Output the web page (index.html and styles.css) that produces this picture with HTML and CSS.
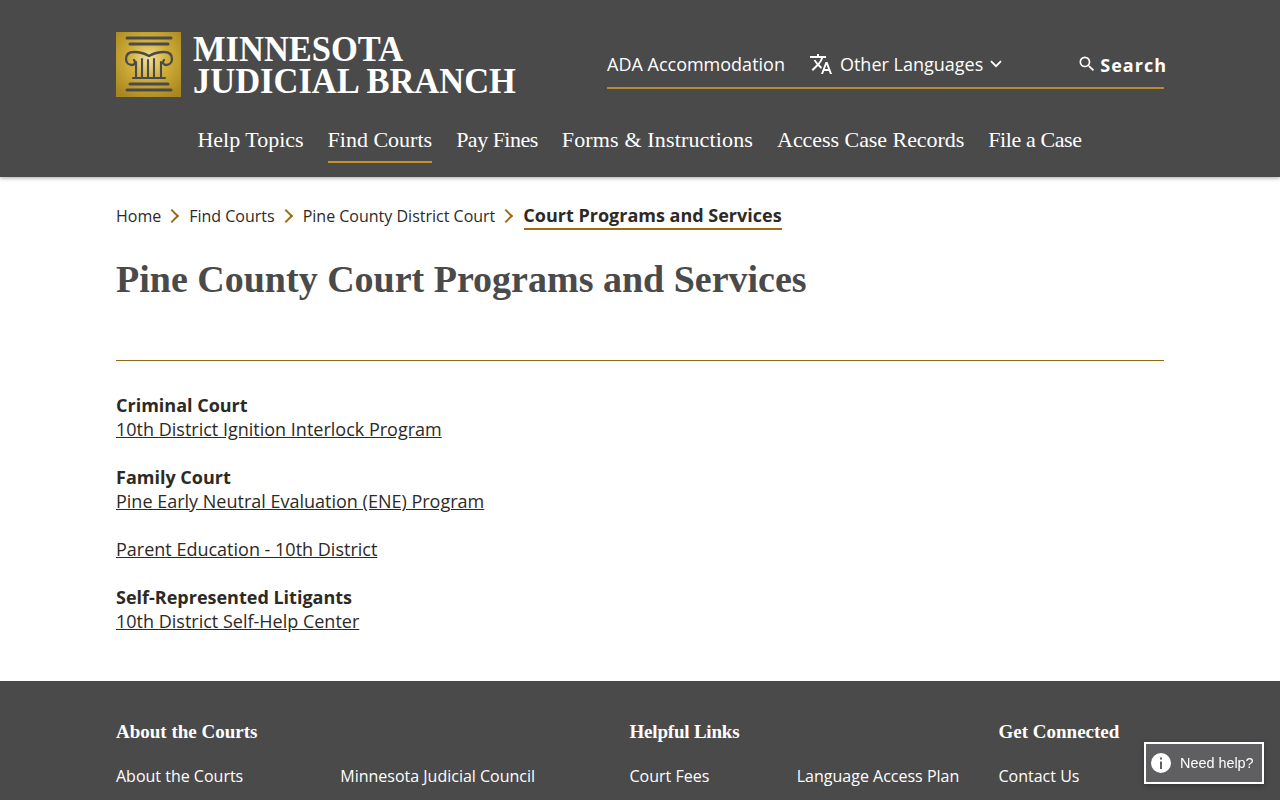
FILE: index.html
```html
<!DOCTYPE html>
<html lang="en">
<head>
<meta charset="utf-8">
<title>Pine County Court Programs and Services</title>
<link rel="stylesheet" href="styles.css">
</head>
<body>
<header class="site-header">
  <div class="header-top">
    <a class="brand" href="#">
      <svg class="brand-mark" viewBox="0 0 65 65" width="65" height="65">
        <defs>
          <radialGradient id="gold" cx="50%" cy="42%" r="68%">
            <stop offset="0" stop-color="#f0e09a"/>
            <stop offset=".45" stop-color="#d0ae3a"/>
            <stop offset="1" stop-color="#a8871f"/>
          </radialGradient>
        </defs>
        <rect width="65" height="65" fill="url(#gold)"/>
        <g fill="none" stroke="#4a4a4a" stroke-linecap="round">
          <path d="M11 6H55M14 12H52M14 52H52M11 58H55" stroke-width="3"/>
          <path d="M33 24C28 21 24 20 18 20C12 20 10 23 10 27C10 31 13 33 16 33C19 33 20 30 18 28M33 24C38 21 42 20 48 20C54 20 56 23 56 27C56 31 53 33 50 33C47 33 46 30 48 28" stroke-width="2.300"/>
          <path d="M20 30V46M26 27V46M32 28V46M38 27V46M45 30V46M17 46H49" stroke-width="2.100"/>
        </g>
      </svg>
      <span class="brand-text"><span>MINNESOTA</span><span>JUDICIAL BRANCH</span></span>
    </a>
    <div class="utility">
      <a class="util-link" href="#">ADA Accommodation</a>
      <a class="util-link lang" href="#">
        <svg class="lang-icon" viewBox="0 0 24 24" width="24" height="24"><path fill="#fff" d="M12.870 15.070l-2.540-2.510.030-.030A17.520 17.520 0 0 0 14.070 6H17V4h-7V2H8v2H1v1.990h11.170C11.500 7.920 10.440 9.750 9 11.350 8.070 10.320 7.300 9.190 6.690 8h-2c.73 1.630 1.730 3.170 2.980 4.560l-5.090 5.020L4 19l5-5 3.110 3.110.76-2.040zM18.500 10h-2L12 22h2l1.120-3h4.750L21 22h2l-4.500-12zm-2.620 7l1.620-4.330L19.120 17h-3.240z"/></svg>
        Other Languages
        <svg class="chev" viewBox="0 0 12 8" width="12" height="8"><path d="M1 1.200l5 5 5-5" fill="none" stroke="#fff" stroke-width="1.800"/></svg>
      </a>
      <a class="search" href="#">
        <svg viewBox="0 0 24 24" width="20" height="20"><path fill="#fff" d="M15.500 14h-.79l-.28-.27A6.470 6.470 0 0 0 16 9.500 6.500 6.500 0 1 0 9.500 16c1.610 0 3.090-.59 4.230-1.570l.27.28v.79l5 4.990L20.490 19l-4.990-5zm-6 0C7.010 14 5 11.990 5 9.500S7.010 5 9.500 5 14 7.010 14 9.500 11.990 14 9.500 14z"/></svg>
        <span class="search-label">Search</span>
      </a>
    </div>
  </div>
  <nav class="main-nav">
    <a href="#">Help Topics</a>
    <a href="#" class="active">Find Courts</a>
    <a href="#" class="tighter">Pay Fines</a>
    <a href="#" class="loose">Forms &amp; Instructions</a>
    <a href="#" class="snug">Access Case Records</a>
    <a href="#" class="tight">File a Case</a>
  </nav>
</header>
<main class="content">
  <ol class="crumbs">
    <li><a href="#">Home</a></li>
    <li><a href="#">Find Courts</a></li>
    <li><a href="#">Pine County District Court</a></li>
    <li class="current">Court Programs and Services</li>
  </ol>
  <h1>Pine County Court Programs and Services</h1>
  <hr class="rule">
  <section class="programs">
    <p><strong>Criminal Court</strong><br><a href="#">10th District Ignition Interlock Program</a></p>
    <p><strong>Family Court</strong><br><a href="#">Pine Early Neutral Evaluation (ENE) Program</a></p>
    <p><a href="#">Parent Education - 10th District</a></p>
    <p><strong>Self-Represented Litigants</strong><br><a href="#">10th District Self-Help Center</a></p>
  </section>
</main>
<footer class="site-footer">
  <div class="foot-col col-about">
    <h2>About the Courts</h2>
    <div class="foot-links"><a href="#">About the Courts</a><a href="#">Minnesota Judicial Council</a></div>
  </div>
  <div class="foot-col col-help">
    <h2>Helpful Links</h2>
    <div class="foot-links"><a href="#">Court Fees</a><a href="#">Language Access Plan</a></div>
  </div>
  <div class="foot-col">
    <h2>Get Connected</h2>
    <div class="foot-links"><a href="#">Contact Us</a></div>
  </div>
</footer>
<button class="help-btn">
  <svg viewBox="0 0 20 20" width="20" height="20"><circle cx="10" cy="10" r="10" fill="#fff"/><path d="M9 8.500h2V16H9zM9 4.500h2v2H9z" fill="#5f5f61"/></svg>
  Need help?
</button>
</body>
</html>
```
FILE: styles.css
```css
* { box-sizing: border-box; }
html, body { margin: 0; height: 800px; overflow: hidden; }
body { font-family: "Open Sans", sans-serif; color: #2d2a26; background: #fff; font-size: 18px; line-height: 24px; }
a { color: inherit; }

.site-header { height: 177px; background: #4a4a4a; padding: 32px 116px 0; box-shadow: 0 1px 4px rgba(0,0,0,.35); position: relative; }
.header-top { display: flex; justify-content: space-between; height: 66px; }
.brand { display: flex; gap: 12px; text-decoration: none; color: #fff; }
.brand-mark { display: block; }
.brand-text { display: flex; flex-direction: column; font-family: "Liberation Serif", serif; font-weight: 700; font-size: 36px; line-height: 32px; padding-top: 1px; white-space: nowrap; transform: scaleX(.958); transform-origin: left top; }
.utility { width: 557px; height: 57px; border-bottom: 2px solid #b98a2e; display: flex; align-items: center; color: #fff; font-size: 18px; padding-top: 8px; }
.util-link { text-decoration: none; white-space: nowrap; }
.lang { margin-left: 24px; display: flex; align-items: center; gap: 7px; }
.lang-icon { display: block; }
.chev { display: block; }
.search { margin-left: auto; margin-right: -3px; display: flex; align-items: center; gap: 3px; font-weight: 700; text-decoration: none; letter-spacing: 1px; }
.search-label { padding-top: 2px; }
.main-nav { display: flex; justify-content: center; gap: 24px; margin: 25px 0 0 -1px; font-family: "Liberation Serif", serif; font-size: 22px; color: #fff; }
.main-nav a { text-decoration: none; height: 40px; line-height: 34px; white-space: nowrap; }
.main-nav .active { border-bottom: 2px solid #c8912a; }
.main-nav .tight { letter-spacing: -.4px; }
.main-nav .tighter { letter-spacing: -.5px; }
.main-nav .snug { letter-spacing: -.05px; }
.main-nav .loose { letter-spacing: .15px; }

.content { padding: 26px 116px 0; height: 504px; }
.crumbs { list-style: none; margin: 0; padding: 0; height: 25px; display: flex; font-size: 16px; line-height: 25px; }
.crumbs li { display: flex; align-items: center; }
.crumbs a { text-decoration: none; padding-top: 2px; }
.crumbs li + li::before { content: ""; width: 8px; height: 8px; margin: 0 12px 0 6px; border-top: 2.5px solid #9a6c14; border-right: 2.5px solid #9a6c14; transform: rotate(45deg); }
.crumbs .current { font-size: 18px; font-weight: 700; position: relative; }
.crumbs .current::after { content: ""; position: absolute; left: 29px; right: 0; bottom: -2px; height: 2px; background: #9a6c14; }
h1 { margin: 27px 0 0; font-family: "Liberation Serif", serif; font-weight: 700; font-size: 38px; line-height: 48px; color: #4a4a4a; }
.rule { border: 0; border-top: 1px solid #8c6c12; margin: 57px 0 0; }
.programs { padding-top: 32px; }
.programs p { margin: 0 0 24px; }
.programs a { text-decoration: underline; }
.programs strong { font-weight: 700; }

.site-footer { height: 119px; background: #4a4a4a; color: #fff; padding: 39px 116px 0; display: flex; font-size: 16px; }
.foot-col h2 { margin: 0; font-family: "Liberation Serif", serif; font-size: 19px; line-height: 24px; font-weight: 700; }
.foot-links { display: flex; margin-top: 20px; }
.foot-links a { text-decoration: none; white-space: nowrap; }
.col-about { width: 513.5px; }
.col-about .foot-links { gap: 97px; }
.col-help { width: 369px; }
.col-help h2 { letter-spacing: -.2px; }
.col-help .foot-links { gap: 87.5px; }

.help-btn { position: fixed; left: 1144px; top: 742px; width: 120px; height: 42px; background: #5f5f61; border: 2px solid #fff; color: #fff; font-family: "Liberation Sans", sans-serif; font-size: 14.4px; display: flex; align-items: center; gap: 9px; padding: 0 0 0 5px; box-shadow: 0 2px 6px rgba(0,0,0,.3); }
```
